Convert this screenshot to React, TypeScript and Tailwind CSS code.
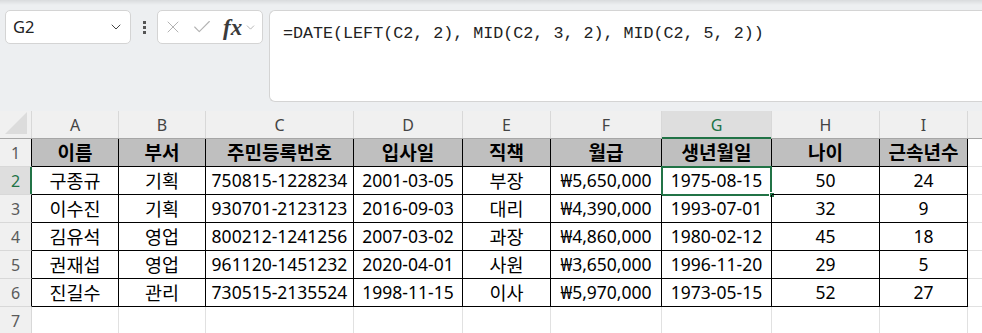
import { X, Check, ChevronDown } from 'lucide-react';

const cols = [
  { key: 'A', w: 'w-[87px]' },
  { key: 'B', w: 'w-[87px]' },
  { key: 'C', w: 'w-[148px]' },
  { key: 'D', w: 'w-[109px]' },
  { key: 'E', w: 'w-[88px]' },
  { key: 'F', w: 'w-[111px]' },
  { key: 'G', w: 'w-[110px]' },
  { key: 'H', w: 'w-[108px]' },
  { key: 'I', w: 'w-[88px]' },
];

const header = ['이름', '부서', '주민등록번호', '입사일', '직책', '월급', '생년월일', '나이', '근속년수'];

const rows = [
  ['구종규', '기획', '750815-1228234', '2001-03-05', '부장', '₩5,650,000', '1975-08-15', '50', '24'],
  ['이수진', '기획', '930701-2123123', '2016-09-03', '대리', '₩4,390,000', '1993-07-01', '32', '9'],
  ['김유석', '영업', '800212-1241256', '2007-03-02', '과장', '₩4,860,000', '1980-02-12', '45', '18'],
  ['권재섭', '영업', '961120-1451232', '2020-04-01', '사원', '₩3,650,000', '1996-11-20', '29', '5'],
  ['진길수', '관리', '730515-2135524', '1998-11-15', '이사', '₩5,970,000', '1973-05-15', '52', '27'],
];

const cellFont = { fontFamily: '"Noto Sans", "Noto Sans CJK KR", sans-serif' };
const korFont = { fontFamily: '"Noto Sans CJK KR", "Noto Sans", sans-serif' };
const korCols = [0, 1, 4];

function TopBar() {
  return (
    <div className="relative h-[111px] bg-[#edeff1]">
      <div className="absolute inset-x-0 top-0 h-[5px] bg-gradient-to-b from-[#d9dbdd] to-transparent" />
      <div className="flex items-start pt-[10px] pl-[5px]">
        <div
          className="flex h-[34px] w-[126px] items-center justify-between rounded-[5px] border border-[#d4d4d4] bg-white pl-[7px] pr-[6px]"
          style={{ fontFamily: '"Noto Sans", sans-serif' }}
        >
          <span className="text-[16.5px] text-[#222]">G2</span>
          <ChevronDown size={16} strokeWidth={1.5} className="text-[#444]" />
        </div>
        <div className="flex h-[34px] w-[26px] flex-col items-center justify-center gap-[2px]">
          <div className="h-[3px] w-[3px] bg-[#555]" />
          <div className="h-[3px] w-[3px] bg-[#555]" />
          <div className="h-[3px] w-[3px] bg-[#555]" />
        </div>
        <div className="flex h-[34px] w-[106px] items-center rounded-[5px] border border-[#d4d4d4] bg-white pl-[5px]">
          <X size={20} strokeWidth={1.2} className="text-[#b3b3b3]" />
          <Check size={22} strokeWidth={1.2} className="ml-[8px] text-[#b3b3b3]" />
          <span
            className="ml-[10px] text-[23px] font-bold italic leading-none text-[#3b3b3b]"
            style={{ fontFamily: '"Liberation Serif", serif' }}
          >
            fx
          </span>
          <ChevronDown size={13} strokeWidth={1.3} className="ml-[2px] text-[#9a9a9a]" />
        </div>
        <div className="ml-[6px] h-[92px] flex-1 rounded-l-[6px] border border-r-0 border-[#d4d4d4] bg-white pl-[13px] pt-[9px]">
          <span
            className="whitespace-pre text-[16.7px] leading-[20px] text-[#222]"
            style={{ fontFamily: '"Liberation Mono", monospace' }}
          >
            =DATE(LEFT(C2, 2), MID(C2, 3, 2), MID(C2, 5, 2))
          </span>
        </div>
      </div>
    </div>
  );
}

function ColumnHeader() {
  return (
    <div className="flex h-[28px] border-b border-[#a6a6a6] bg-[#f0f0f0]" style={cellFont}>
      <div className="relative w-[32px] border-r border-[#d8d8d8]">
        <div
          className="absolute bottom-[4px] right-[4px] h-0 w-0"
          style={{ borderBottom: '22px solid #dcdcdc', borderLeft: '22px solid transparent' }}
        />
      </div>
      {cols.map((c) =>
        c.key === 'G' ? (
          <div
            key={c.key}
            className={`${c.w} relative flex items-center justify-center border-r border-[#d8d8d8] bg-[#dedede] text-[16px] text-[#217346]`}
          >
            {c.key}
            <div className="absolute inset-x-0 -bottom-[1px] h-[2px] bg-[#217346]" />
          </div>
        ) : (
          <div
            key={c.key}
            className={`${c.w} flex items-center justify-center border-r border-[#d8d8d8] text-[16px] text-[#444]`}
          >
            {c.key}
          </div>
        )
      )}
      <div className="flex-1" />
    </div>
  );
}

function RowNum({ n, active, dark }: { n: number; active?: boolean; dark?: boolean }) {
  return (
    <div
      className={`relative flex w-[32px] items-center justify-center border-b border-[#d8d8d8] text-[16px] ${
        active ? 'bg-[#dedede] text-[#217346]' : 'bg-[#f0f0f0] text-[#5a5a5a]'
      } ${dark ? 'border-r border-r-black' : 'border-r border-r-[#d8d8d8]'}`}
      style={cellFont}
    >
      {n}
      {active && <div className="absolute inset-y-0 -right-[1px] w-[2px] bg-[#217346]" />}
    </div>
  );
}

export default function App() {
  return (
    <div className="h-[333px] w-[982px] overflow-hidden bg-white">
      <TopBar />
      <ColumnHeader />
      <div className="flex h-[28px]">
        <RowNum n={1} dark />
        {header.map((h, i) => (
          <div
            key={i}
            className={`${cols[i].w} flex items-center justify-center border-b border-r border-black bg-[#bfbfbf] text-[19px] font-bold text-black`}
            style={korFont}
          >
            {h}
          </div>
        ))}
        <div className="flex-1 border-b border-[#e1e1e1]" />
      </div>
      {rows.map((r, ri) => (
        <div key={ri} className="flex h-[28px]">
          <RowNum n={ri + 2} active={ri === 0} dark />
          {r.map((v, ci) => (
            <div
              key={ci}
              className={`${cols[ci].w} relative flex items-center justify-center border-b border-r border-black text-black ${
                korCols.includes(ci) ? 'text-[18.5px]' : 'text-[17.5px]'
              }`}
              style={korCols.includes(ci) ? korFont : cellFont}
            >
              {v}
              {ri === 0 && ci === 6 && (
                <>
                  <div className="absolute -left-[1px] -top-[1px] h-[30px] w-[111px] border-2 border-[#217346]" />
                  <div className="absolute -bottom-[4px] -right-[4px] h-[6px] w-[6px] border border-white bg-[#217346]" />
                </>
              )}
            </div>
          ))}
          <div className="flex-1 border-b border-[#e1e1e1]" />
        </div>
      ))}
      <div className="flex h-[28px]">
        <RowNum n={7} />
        {cols.map((c) => (
          <div key={c.key} className={`${c.w} border-b border-r border-[#e1e1e1]`} />
        ))}
        <div className="flex-1" />
      </div>
    </div>
  );
}
